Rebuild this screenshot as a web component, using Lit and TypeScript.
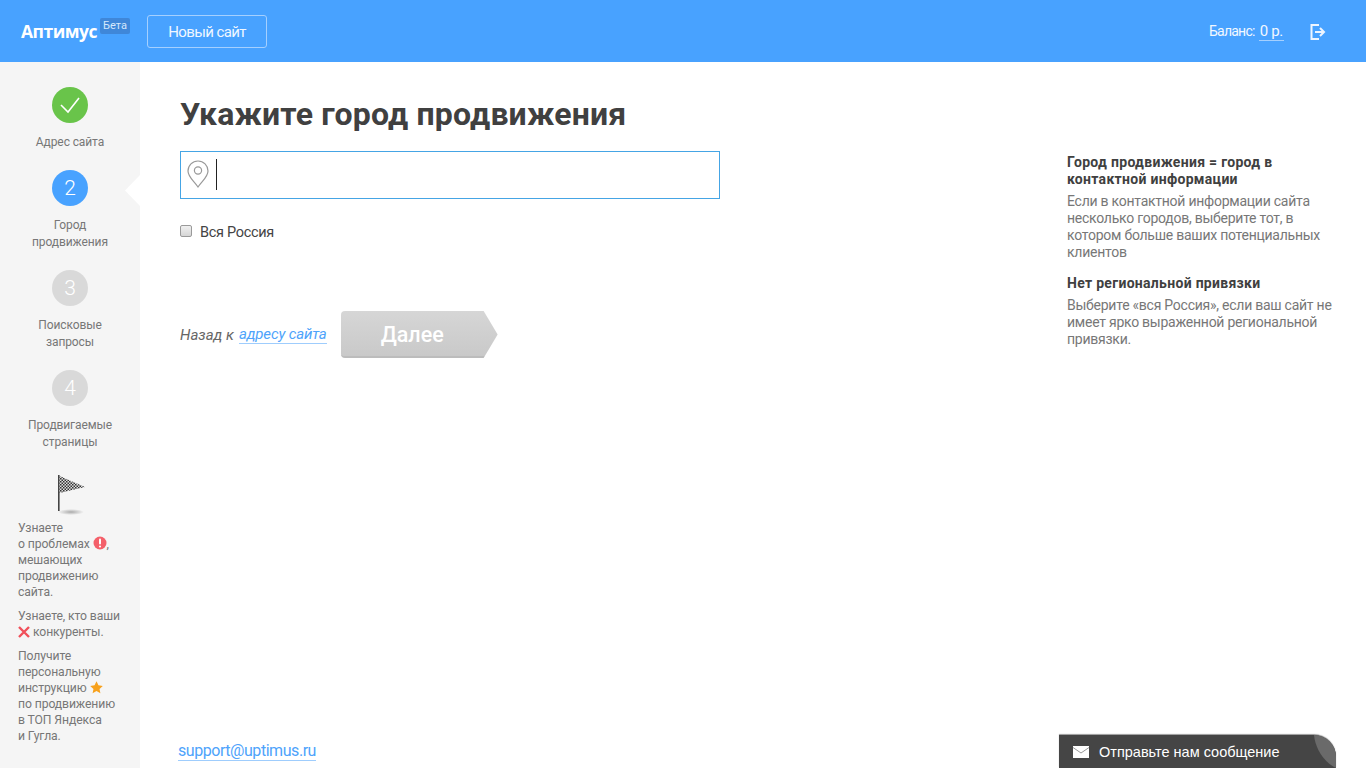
import { LitElement, html, css } from "lit";
import { customElement } from "lit/decorators.js";

const steps = [
  { n: "", label: ["Адрес сайта"], state: "done" },
  { n: "2", label: ["Город", "продвижения"], state: "active" },
  { n: "3", label: ["Поисковые", "запросы"], state: "todo" },
  { n: "4", label: ["Продвигаемые", "страницы"], state: "todo" },
];

@customElement("app-root")
export class AppRoot extends LitElement {
  static styles = css`
    :host { display: block; height: 768px; overflow: hidden; font-family: "Roboto", "Noto Sans", sans-serif; color: #444; background: #fff; position: relative; }
    * { box-sizing: border-box; }
    .top { height: 62px; background: #48a2ff; color: #fff; display: flex; align-items: center; padding-left: 21px; }
    .logo { font-size: 17.5px; font-weight: 700; line-height: 22px; width: 76px; font-family: "Open Sans", "Roboto", sans-serif; letter-spacing: -.5px; white-space: nowrap; }
    .beta { width: 30px; height: 16px; margin: -11px 0 0 3px; background: #3f87d9; border-radius: 2px; font-size: 11px; line-height: 16px; text-align: center; color: #d5e8fc; }
    .new { margin-left: 17px; width: 120px; height: 33px; border: 1px solid #a5d0ff; border-radius: 3px; font-size: 15px; letter-spacing: -.6px; line-height: 33px; text-align: center; color: #f0f7ff; }
    .balance { margin-left: auto; font-size: 14px; color: #f2f8ff; display: flex; gap: 4px; }
    .balance span { border-bottom: 1px solid #a5d0ff; line-height: 18px; height: 19px; padding: 0 1px; font-size: 15px; letter-spacing: -.3px; }
    .balance b { font-weight: 400; line-height: 18px; letter-spacing: -.75px; }
    .logout { margin: 2px 40px 0 26px; width: 16px; height: 16px; display: block; }
    .body { display: flex; height: 706px; }
    .side { width: 140px; background: #f5f5f5; flex: none; position: relative; padding-top: 25px; }
    .notch { position: absolute; left: 125px; top: 113px; width: 15px; height: 31px; background: #fff; clip-path: polygon(100% 0, 0 50%, 100% 100%); }
    .step { display: flex; flex-direction: column; align-items: center; margin-bottom: 19px; }
    .circle { width: 36px; height: 36px; border-radius: 50%; color: #fff; font-size: 21px; font-weight: 300; display: flex; align-items: center; justify-content: center; background: #d9d9d9; margin-bottom: 11px; }
    .done { background: #69c44a; }
    .active { background: #48a2ff; }
    .lbl { font-size: 12px; line-height: 17px; color: #777; text-align: center; letter-spacing: -.1px; }
    .flag { display: block; margin: 24px 0 3px 57px; width: 30px; height: 42px; }
    .promo { padding-left: 18px; font-size: 12.2px; line-height: 16px; color: #777; letter-spacing: -.1px; }
    .promo p { margin: 0 0 8px; }
    .promo svg { vertical-align: -2px; }
    .main { flex: 1; min-width: 0; display: flex; padding-left: 40px; position: relative; }
    .col { width: 540px; display: flex; flex-direction: column; height: 100%; }
    h1 { margin: 30px 0 0; font-size: 32px; line-height: 44px; font-weight: 700; color: #404040; letter-spacing: .16px; white-space: nowrap; }
    .field { margin-top: 15px; height: 48px; border: 1px solid #45a5e5; display: flex; align-items: center; padding-left: 6px; gap: 6px; }
    .pin { margin-top: -3px; }
    .caret { width: 1px; height: 31px; background: #222; margin: -2px 0 0 1px; }
    .check { margin-top: 24px; display: flex; align-items: center; font-size: 14.5px; letter-spacing: -.3px; line-height: 20px; color: #444; }
    .box { width: 12px; height: 12px; border: 1px solid #9a9a9a; border-radius: 2px; background: linear-gradient(#f0f0f0, #d6d6d6); margin: -5px 8px 0 0; }
    .nav { margin-top: 68px; display: flex; align-items: center; font-size: 15px; font-style: italic; color: #666; white-space: nowrap; }
    .nav a { color: #4ea3fb; border-bottom: 1px solid #9fcdfd; margin-left: 5px; line-height: 17px; letter-spacing: -.15px; }
    .next { margin-left: 14px; width: 157px; height: 47px; background: linear-gradient(#d6d6d6, #c9c9c9); border-bottom: 2px solid #bcbcbc; border-radius: 4px 0 0 4px; clip-path: polygon(0 0, 143px 0, 100% 50%, 143px 100%, 0 100%); color: #fff; font-size: 21.5px; font-style: normal; font-weight: 500; line-height: 47px; padding-left: 40px; }
    .mail { margin-top: auto; margin-bottom: 7px; margin-left: -2px; align-self: flex-start; font-size: 16px; letter-spacing: -.45px; line-height: 18px; color: #4ea3fb; border-bottom: 1px solid #9fcdfd; }
    .help { margin-left: 347px; padding-top: 92px; width: 290px; font-size: 14px; line-height: 17px; color: #777; letter-spacing: -.25px; white-space: nowrap; }
    .help h3 { margin: 0 0 5px; font-size: 14px; line-height: 17px; font-weight: 700; color: #404040; letter-spacing: .3px; }
    .help p { margin: 0 0 14px; }
    .widget { position: absolute; left: 1059px; bottom: 0; width: 277px; height: 33px; background: #454545; border-radius: 0 22px 0 0; color: #fff; font-family: "Liberation Sans", Arial, sans-serif; font-size: 14.5px; display: flex; align-items: center; padding-left: 14px; gap: 10px; overflow: hidden; box-shadow: 0 -1px 1px #999; }
    .curl { position: absolute; right: 0; top: 0; width: 23px; height: 33px; display: block; }
  `;

  render() {
    return html`
      <div class="top">
        <div class="logo">Аптимус</div>
        <div class="beta">Бета</div>
        <div class="new">Новый сайт</div>
        <div class="balance"><b>Баланс:</b><span>0 р.</span></div>
        <svg class="logout" viewBox="0 0 16 16" fill="none" stroke="#edf5ff" stroke-width="2">
          <path d="M9 1H1.5v14H9" /><path d="M5 8h8.5M10 4 14 8l-4 4" />
        </svg>
      </div>
      <div class="body">
        <aside class="side">
          <div class="notch"></div>
          ${steps.map(
            (s) => html`<div class="step">
              <div class="circle ${s.state}">
                ${s.state === "done"
                  ? html`<svg width="22" height="22" viewBox="0 0 22 22" fill="none" stroke="#fff" stroke-width="1.6"><path d="M2 11l7 7L20 4" /></svg>`
                  : s.n}
              </div>
              <div class="lbl">${s.label.map((l) => html`${l}<br />`)}</div>
            </div>`
          )}
          <svg class="flag" viewBox="0 0 30 42">
            <defs>
              <pattern id="chk" width="3" height="3" patternUnits="userSpaceOnUse">
                <rect width="3" height="3" fill="#ddd" /><rect width="1.5" height="1.5" fill="#333" /><rect x="1.5" y="1.5" width="1.5" height="1.5" fill="#333" />
              </pattern>
              <radialGradient id="sh"><stop offset="0" stop-color="#aaa" /><stop offset="1" stop-color="#f5f5f5" /></radialGradient>
            </defs>
            <ellipse cx="14" cy="37" rx="13" ry="3" fill="url(#sh)" />
            <rect x="1" y="0" width="1.6" height="36" fill="#444" />
            <path d="M2.6 1 28 12 2.6 18z" fill="url(#chk)" />
          </svg>
          <div class="promo">
            <p>Узнаете<br />о проблемах
              <svg width="14" height="14" viewBox="0 0 14 14"><circle cx="7" cy="7" r="6.5" fill="#f4606a" /><rect x="6" y="2.5" width="2" height="6" rx="1" fill="#fff" /><circle cx="7" cy="10.5" r="1.1" fill="#fff" /></svg>,<br />мешающих<br />продвижению<br />сайта.</p>
            <p>Узнаете, кто ваши<br /><svg width="12" height="12" viewBox="0 0 12 12" stroke="#f0505a" stroke-width="2.4"><path d="M1 1l10 10M11 1 1 11" /></svg>
              конкуренты.</p>
            <p>Получите<br />персональную<br />инструкцию
              <svg width="13" height="13" viewBox="0 0 12 12"><path d="M6 .3l1.8 3.7 4 .5-3 2.8.8 4L6 9.3 2.4 11.3l.8-4-3-2.8 4-.5z" fill="#f7a11c" /></svg><br />по продвижению<br />в ТОП Яндекса<br />и Гугла.</p>
          </div>
        </aside>
        <main class="main">
          <div class="col">
            <h1>Укажите город продвижения</h1>
            <div class="field">
              <svg class="pin" width="22" height="28" viewBox="0 0 22 28" fill="none" stroke="#999" stroke-width="1.2">
                <path d="M11 27C7 21 1 17 1 11a10 10 0 0 1 20 0c0 6-6 10-10 16z" /><circle cx="11" cy="10.5" r="3.6" />
              </svg>
              <div class="caret"></div>
            </div>
            <div class="check"><div class="box"></div>Вся Россия</div>
            <div class="nav">Назад к <a>адресу сайта</a><div class="next">Далее</div></div>
            <div class="mail">support@uptimus.ru</div>
          </div>
          <div class="help">
            <h3>Город продвижения = город в<br />контактной информации</h3>
            <p>Если в контактной информации сайта<br />несколько городов, выберите тот, в<br />котором больше ваших потенциальных<br />клиентов</p>
            <h3>Нет региональной привязки</h3>
            <p>Выберите «вся Россия», если ваш сайт не<br />имеет ярко выраженной региональной<br />привязки.</p>
          </div>
        </main>
      </div>
      <div class="widget">
        <svg width="16" height="12" viewBox="0 0 16 12"><rect width="16" height="12" fill="#fff" /><path d="M0 1.5 8 7l8-5.5" fill="none" stroke="#999" stroke-width="1" /></svg>
        <span>Отправьте нам сообщение</span>
        <svg class="curl" viewBox="0 0 23 33"><path d="M1 0C2 12 10 27 23 33V0z" fill="#6a6a6a" /></svg>
      </div>
    `;
  }
}
